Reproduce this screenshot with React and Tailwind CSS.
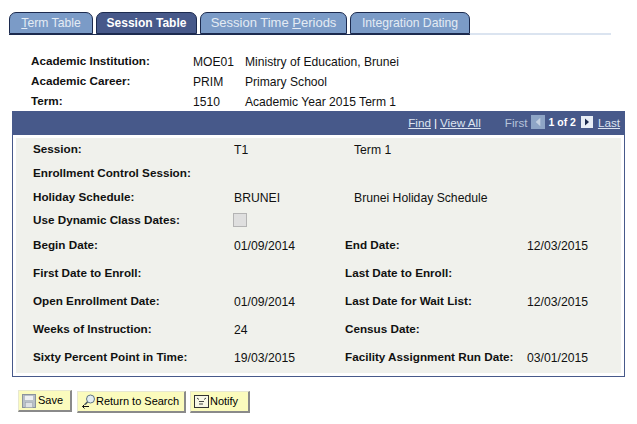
import React from "react";

const tabs = [
  { label: "Term Table", key: "T", width: "w-[84px]", text: "text-[12.2px]" },
  { label: "Session Table", active: true, width: "w-[101px]", text: "text-[12px]" },
  { label: "Session Time Periods", key: "P", width: "w-[147px]", text: "text-[13px]" },
  { label: "Integration Dating", width: "w-[120px]", text: "text-[12.2px]" },
];

const Tab = ({ tab }) => {
  // underline the access key letter
  const i = tab.key ? tab.label.indexOf(tab.key) : -1;
  return (
    <div
      className={`${tab.width} ${tab.text} h-[22px] rounded-t-[7px] border border-[#1c2a4e] flex items-center justify-center whitespace-nowrap ${
        tab.active
          ? "bg-[#47598a] text-white font-bold"
          : "bg-[#7b9bc7] text-[#e4ebf4]"
      }`}
    >
      {i >= 0 ? (
        <span>
          {tab.label.slice(0, i)}
          <span className="underline">{tab.key}</span>
          {tab.label.slice(i + 1)}
        </span>
      ) : (
        tab.label
      )}
    </div>
  );
};

const headerRows = [
  ["Academic Institution:", "MOE01", "Ministry of Education, Brunei"],
  ["Academic Career:", "PRIM", "Primary School"],
  ["Term:", "1510", "Academic Year 2015 Term 1"],
];

const rows = [
  { h: "h-[24px]", label: "Session:", value: "T1", desc: "Term 1" },
  { h: "h-[24px]", label: "Enrollment Control Session:" },
  { h: "h-[24px]", label: "Holiday Schedule:", value: "BRUNEI", desc: "Brunei Holiday Schedule" },
  { h: "h-[22px]", label: "Use Dynamic Class Dates:", check: true },
  { h: "h-[28px]", label: "Begin Date:", value: "01/09/2014", label2: "End Date:", value2: "12/03/2015" },
  { h: "h-[28px]", label: "First Date to Enroll:", label2: "Last Date to Enroll:" },
  { h: "h-[28px]", label: "Open Enrollment Date:", value: "01/09/2014", label2: "Last Date for Wait List:", value2: "12/03/2015" },
  { h: "h-[28px]", label: "Weeks of Instruction:", value: "24", label2: "Census Date:" },
  { h: "h-[28px]", label: "Sixty Percent Point in Time:", value: "19/03/2015", label2: "Facility Assignment Run Date:", value2: "03/01/2015" },
];

const Row = ({ row }) => (
  <div className={`${row.h} flex items-center text-[12.2px] text-[#111]`}>
    <div className="w-[218px] pl-[17px] text-[11.7px] font-bold -mt-[2px] shrink-0">{row.label}</div>
    <div className="w-[111px] shrink-0 flex items-center">
      {row.check ? (
        <div className="w-[14px] h-[14px] bg-[#dfdfdf] border border-[#b4b4b4] -ml-[1px] -mt-[3px]" />
      ) : (
        row.value
      )}
    </div>
    {row.desc && <div className="pl-[9px]">{row.desc}</div>}
    {row.label2 && (
      <div className="w-[182px] shrink-0 text-[11.7px] font-bold -mt-[2px]">{row.label2}</div>
    )}
    {row.value2 && <div>{row.value2}</div>}
  </div>
);

const Arrow = ({ left, disabled }) => (
  <svg width={disabled ? 14 : 12} height={disabled ? 14 : 12} viewBox="0 0 15 15" className="block">
    <rect width="15" height="15" fill={disabled ? "#8ea5c6" : "#e8eef6"} />
    <path
      d={left ? "M10 3 L5 7.5 L10 12 Z" : "M5 3 L10 7.5 L5 12 Z"}
      fill={disabled ? "#c3d0e1" : "#1c2a4e"}
    />
  </svg>
);

const SaveIcon = () => (
  <svg width="14" height="14" viewBox="0 0 14 14">
    <rect x="0.5" y="0.5" width="13" height="13" fill="#b9c0c8" stroke="#8b939c" />
    <rect x="2.5" y="1.5" width="9" height="5" fill="#eef0f2" stroke="#a3aab2" strokeWidth="0.5" />
    <rect x="3.5" y="8.5" width="7" height="5" fill="#dfe2e5" stroke="#9aa1a9" strokeWidth="0.5" />
  </svg>
);

const SearchIcon = () => (
  <svg width="15" height="15" viewBox="0 0 15 15" fill="none">
    <circle cx="9.5" cy="5" r="4" fill="#e4edf2" stroke="#5f7482" />
    <path d="M6.5 8 L4 10.5" stroke="#46555f" strokeWidth="1.6" />
    <path d="M8 12.5 H1.5 M3.5 10.5 L1.5 12.5 L3.5 14.5" stroke="#111" />
  </svg>
);

const NotifyIcon = () => (
  <svg width="15" height="13" viewBox="0 0 15 13" fill="none">
    <rect x="0.5" y="0.5" width="14" height="12" fill="#f8f8e6" stroke="#333" />
    <path d="M3 3 L5 4.5 M12 3 L10 4.5 M5 6.5 H10 M5 9 H9" stroke="#444" />
  </svg>
);

const Button = ({ icon, label, className }) => (
  <div
    className={`h-[22px] flex items-center whitespace-nowrap bg-[#fbfbbd] border-r-2 border-b-2 border-[#8a8a8a] border-t border-l border-t-[#e8e8d0] border-l-[#e8e8d0] text-[11px] text-black ${className}`}
  >
    {icon}
    {label}
  </div>
);

export default function App() {
  return (
    <div className="w-[637px] h-[424px] bg-white overflow-hidden font-['Liberation_Sans',Arial,sans-serif] pt-3">
      {/* tabs */}
      <div className="flex items-end pl-[9px]">
        <div className="flex gap-[3px] border-b border-[#1c2a4e]">
          {tabs.map((tab) => (
            <Tab key={tab.label} tab={tab} />
          ))}
        </div>
        <div className="w-[141px] h-[2px] bg-[#dbe4f0]" />
      </div>

      {/* key fields */}
      <div className="pl-[31px] pt-[17px] h-[76px] text-[12.1px] text-[#111]">
        {headerRows.map((r) => (
          <div key={r[0]} className="h-5 flex items-center">
            <div className="w-[162px] text-[11.7px] font-bold -mt-[2px]">{r[0]}</div>
            <div className="w-[52px]">{r[1]}</div>
            <div>{r[2]}</div>
          </div>
        ))}
      </div>

      {/* scroll area */}
      <div className="ml-3 w-[613px] h-[266px] border border-t-0 border-[#47598a] flex flex-col">
        <div className="h-[24px] shrink-0 bg-[#47598a] flex items-center justify-end pr-[4px] text-[11.7px] text-[#dce4f0]">
          <span className="underline">Find</span>
          <span className="px-[3px] text-white">|</span>
          <span className="underline">View All</span>
          <span className="ml-6 text-[#b6c4da]">First</span>
          <span className="ml-[4px] -mt-[3px]"><Arrow left disabled /></span>
          <span className="ml-[3px] text-[10.5px] font-bold text-white">1 of 2</span>
          <span className="ml-[5px] -mt-[3px]"><Arrow /></span>
          <span className="ml-[5px] underline">Last</span>
        </div>
        <div className="mx-[3px] my-[3px] flex-1 bg-[#f0f1ec]">
          {rows.map((row) => (
            <Row key={row.label} row={row} />
          ))}
        </div>
      </div>

      {/* toolbar */}
      <div className="flex items-start pl-[18px] pt-[13px]">
        <Button className="w-[54px] pl-[3px] gap-[2px]" icon={<SaveIcon />} label="Save" />
        <Button className="w-[109px] pl-[3px] ml-[5px] mt-[1px]" icon={<SearchIcon />} label="Return to Search" />
        <Button className="w-[60px] pl-[3px] ml-[4px] mt-[1px] gap-[1px]" icon={<NotifyIcon />} label="Notify" />
      </div>
    </div>
  );
}
